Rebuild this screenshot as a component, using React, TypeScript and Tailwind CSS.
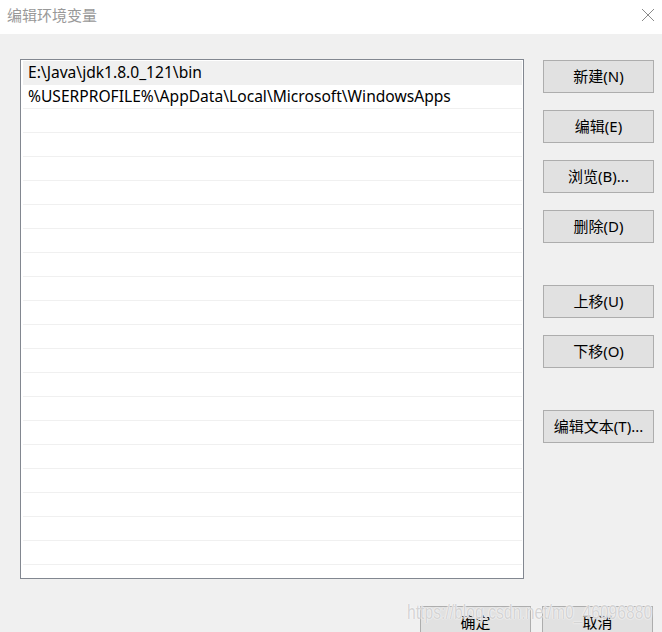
import React from 'react';

const font = { fontFamily: '"Noto Sans", "Noto Sans CJK SC", sans-serif' };

const paths = ['E:\\Java\\jdk1.8.0_121\\bin', '%USERPROFILE%\\AppData\\Local\\Microsoft\\WindowsApps'];

const Btn: React.FC<{ label: string; className?: string }> = ({ label, className = '' }) => (
  <button
    className={`w-[111px] h-[33px] bg-[#e1e1e1] border border-[#adadad] text-[15px] text-black leading-none ${className}`}
  >
    {label}
  </button>
);

const App: React.FC = () => {
  const rows = Array.from({ length: 21 }, (_, i) => paths[i] ?? '');
  return (
    <div className="w-[662px] h-[632px] bg-[#f0f0f0] overflow-hidden relative" style={font}>
      {/* title bar */}
      <div className="h-[34px] bg-white flex items-center justify-between pl-[7px] pr-[6px]">
        <span className="text-[15px] text-[#999999] -mt-[3px]">编辑环境变量</span>
        <svg width="16" height="16" viewBox="0 0 16 16" className="-mt-[4px]">
          <path d="M2 2L14 14M14 2L2 14" stroke="#8a8a8a" strokeWidth="1" fill="none" />
        </svg>
      </div>

      <div className="flex pt-[25px] pl-[20px]">
        {/* list */}
        <div className="w-[504px] h-[520px] bg-white border border-[#828790] pt-px px-px">
          {rows.map((r, i) => (
            <div
              key={i}
              className={`h-[24px] border-b border-[#f0f0f0] ml-px flex items-center pl-[5px] text-[15.6px] text-black whitespace-nowrap ${
                i === 0 ? 'bg-[#f0f0f0]' : ''
              }`}
            >
              {r}
            </div>
          ))}
        </div>

        {/* side buttons */}
        <div className="flex flex-col ml-[19px] pt-px">
          <Btn label="新建(N)" />
          <Btn label="编辑(E)" className="mt-[17px]" />
          <Btn label="浏览(B)..." className="mt-[17px]" />
          <Btn label="删除(D)" className="mt-[17px]" />
          <Btn label="上移(U)" className="mt-[42px]" />
          <Btn label="下移(O)" className="mt-[17px]" />
          <Btn label="编辑文本(T)..." className="mt-[42px]" />
        </div>
      </div>

      {/* bottom buttons */}
      <div className="flex justify-end gap-[11px] pr-[9px] mt-[27px]">
        <Btn label="确定" />
        <Btn label="取消" />
      </div>

      {/* watermark */}
      <div
        className="absolute left-[407px] top-[597px] text-[20px] text-[#d4d4d4] whitespace-nowrap origin-left scale-x-[0.785]"
        style={{ fontFamily: '"Liberation Sans", Arial, sans-serif', textShadow: '0 0 2px #fff, 0 0 1px #fff' }}
      >
        https://blog.csdn.net/m0_46096880
      </div>
    </div>
  );
};

export default App;
